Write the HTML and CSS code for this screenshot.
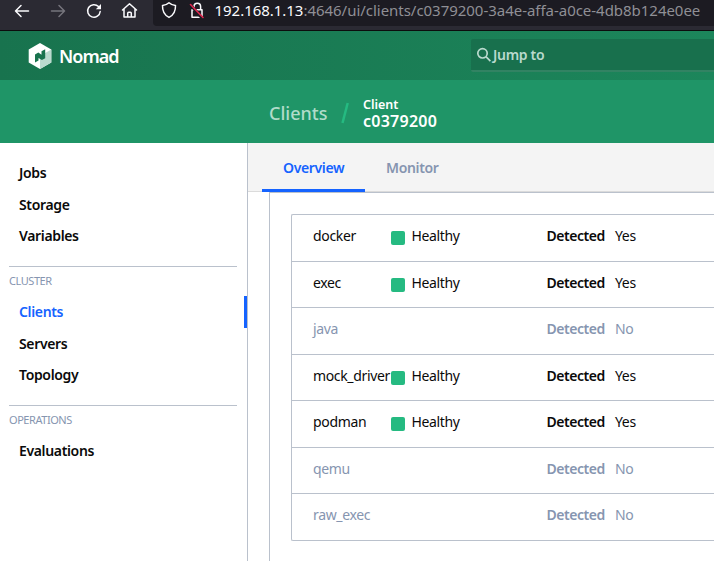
FILE: index.html
```html
<!DOCTYPE html>
<html lang="en">
<head>
<meta charset="utf-8">
<title>Client c0379200 - Nomad</title>
<link rel="stylesheet" href="styles.css">
</head>
<body>
<div class="browser">
  <svg class="tools" width="153" height="30" viewBox="0 0 153 30" fill="none" stroke-width="1.5" stroke-linecap="round" stroke-linejoin="round">
    <path stroke="#fbfbfe" d="M28.5 11H15.5M21 5.5 15.5 11l5.500 5.500"/>
    <path stroke="#76757d" d="M51.500 11H64.500M59 5.500 64.500 11 59 16.500"/>
    <path stroke="#fbfbfe" d="M98.500 6.600A6.300 6.300 0 1 0 100.200 11.500"/>
    <path fill="#fbfbfe" d="M101 4v5.200h-5.200z"/>
    <path stroke="#fbfbfe" d="M122.500 10 129.500 3.800 136.500 10M124 9v8h11V9M127.700 17v-3.700q0-1 1-1h1.600q1 0 1 1V17"/>
  </svg>
  <div class="urlbar">
    <svg class="guards" width="62" height="26" viewBox="0 0 62 26" fill="none" stroke-width="1.500" stroke-linecap="round" stroke-linejoin="round">
      <path stroke="#fbfbfe" d="M16 2.700C14 4.500 12 5.200 9.500 5.400 9.300 10.500 11 15 16 17.400 21 15 22.700 10.500 22.500 5.400 20 5.200 18 4.500 16 2.700z"/>
      <path stroke="#fbfbfe" d="M39 9.700h10v7.600H39zM41 9.500V6.500a3.300 3.300 0 0 1 6.600 0V9.500"/>
      <path stroke="#1c1b22" stroke-width="3" d="M38.500 6 49 18"/>
      <path stroke="#e22850" stroke-width="1.600" d="M37.500 4.500 50 17.500"/>
    </svg>
    <span class="address"><b>192.168.1.13</b>:4646/ui/clients/c0379200-3a4e-affa-a0ce-4db8b124e0ee</span>
  </div>
</div>
<header class="top">
  <div class="brand">
    <svg width="24" height="28" viewBox="0 0 24 28">
      <path fill="#fff" d="M12 1 23.300 7.500V20.500L12 27 .7 20.500V7.500z"/>
      <path fill="#badace" d="M23.300 7.500V20.500L12 27V14z"/>
      <path fill="#18734e" d="M7 12.400 10.300 10.500 13.500 12.700V9.300L17.200 7.200V16.200L13.900 18 10.500 15.900V18.600L7 20.600z"/>
    </svg>
    <span class="wordmark">Nomad</span>
  </div>
  <div class="search">
    <svg width="16" height="16" viewBox="0 0 16 16" fill="none" stroke="#badace" stroke-width="1.700"><circle cx="6.500" cy="6.300" r="4.700"/><path d="M9.900 9.700 14.400 14.200"/></svg>
    <span>Jump to</span>
  </div>
</header>
<div class="crumbs">
  <a class="parent">Clients</a>
  <svg class="slash" width="9" height="22" viewBox="0 0 9 22"><path d="M1.500 21 6.700 1" stroke="#25ba81" stroke-width="2.500"/></svg>
  <div class="current"><span class="kind">Client</span><span class="ident">c0379200</span></div>
</div>
<div class="page">
  <nav class="side">
    <a>Jobs</a><a>Storage</a><a>Variables</a>
    <h2>Cluster</h2>
    <a class="active">Clients</a><a>Servers</a><a>Topology</a>
    <h2>Operations</h2>
    <a>Evaluations</a>
  </nav>
  <main>
    <div class="tabs"><a class="on">Overview</a><a>Monitor</a></div>
    <section class="panel">
      <div class="drivers">
        <div class="row"><span class="name">docker</span><i></i><span class="health">Healthy</span><b>Detected</b><span>Yes</span></div>
        <div class="row"><span class="name">exec</span><i></i><span class="health">Healthy</span><b>Detected</b><span>Yes</span></div>
        <div class="row off"><span class="name">java</span><b>Detected</b><span>No</span></div>
        <div class="row"><span class="name">mock_driver</span><i></i><span class="health">Healthy</span><b>Detected</b><span>Yes</span></div>
        <div class="row"><span class="name">podman</span><i></i><span class="health">Healthy</span><b>Detected</b><span>Yes</span></div>
        <div class="row off"><span class="name">qemu</span><b>Detected</b><span>No</span></div>
        <div class="row off"><span class="name">raw_exec</span><b>Detected</b><span>No</span></div>
      </div>
    </section>
  </main>
</div>
</body>
</html>
```

FILE: styles.css
```css
* { box-sizing: border-box; }
body {
  margin: 0;
  height: 561px;
  overflow: hidden;
  display: flex;
  flex-direction: column;
  background: #fff;
  color: #0a0a0a;
  font: 14px/20px "Noto Sans", sans-serif;
}
svg { display: block; flex: none; }
.browser {
  flex: none;
  height: 31px;
  display: flex;
  background: #2b2a33;
  border-bottom: 1px solid #0c0c0d;
}
.urlbar {
  flex: 1;
  height: 26px;
  display: flex;
  background: #1c1b22;
  border-bottom-left-radius: 4px;
  white-space: nowrap;
}
.address { margin-left: -0.5px; color: #8f8f95; font-size: 15px; line-height: 20px; letter-spacing: -0.03px; }
.address b { color: #fbfbfe; font-weight: 400; }
.top {
  flex: none;
  height: 49px;
  display: flex;
  justify-content: space-between;
  align-items: center;
  background: linear-gradient(to right, #18734e, #1c865b);
}
.brand { display: flex; align-items: center; gap: 7px; padding-left: 28px; }
.wordmark { color: #fff; font-size: 18px; font-weight: 600; line-height: 24px; letter-spacing: -1px; }
.search {
  width: 243px;
  height: 33px;
  display: flex;
  align-items: center;
  gap: 1px;
  padding: 1px 0 0 5px;
  border-bottom: 2px solid #328363;
  border-radius: 2px 0 0 2px;
  background: #18704d;
  color: #badace;
  font-weight: 600;
  letter-spacing: -0.3px;
}
.crumbs {
  flex: none;
  height: 63px;
  display: flex;
  align-items: center;
  padding: 3px 0 0 269px;
  background: #1f9567;
  color: #fff;
  font-weight: 600;
}
.parent { width: 72px; color: #b1dcca; font-size: 18px; font-weight: 500; }
.slash { margin-right: 13px; }
.current { display: flex; flex-direction: column; }
.kind { font-size: 12.5px; line-height: 17px; }
.ident { font-size: 16px; line-height: 17px; letter-spacing: 0.25px; }
.page { flex: 1; min-height: 0; display: flex; }
.side {
  width: 248px;
  padding-top: 14px;
  border-right: 1px solid #bac1cc;
}
.side a {
  display: block;
  height: 31.500px;
  padding-left: 19px;
  font-weight: 600;
  line-height: 31px;
  letter-spacing: -0.35px;
}
.side .active { color: #1563ff; border-right: 3px solid #1563ff; }
.side h2 {
  height: 30px;
  margin: 14.500px 10px 0 9px;
  border-top: 1px solid #bac1cc;
  color: #8695b0;
  font-size: 11px;
  font-weight: 400;
  line-height: 28.500px;
  letter-spacing: -0.45px;
  text-transform: uppercase;
}
main { flex: 1; min-width: 0; display: flex; flex-direction: column; }
.tabs {
  flex: none;
  height: 49px;
  display: flex;
  padding-left: 14px;
  background: #f4f4f4;
  border-bottom: 1px solid #dbdbdb;
}
.tabs a {
  height: 49px;
  padding: 0 21px;
  color: #8695b0;
  font-weight: 600;
  line-height: 50px;
  letter-spacing: -0.35px;
}
.tabs .on { width: 103px; color: #1563ff; border-bottom: 3px solid #1563ff; }
.panel {
  flex: 1;
  min-height: 0;
  margin-left: 21px;
  padding: 21px 0 0 21px;
  border: solid #bac1cc;
  border-width: 1px 0 0 1px;
}
.drivers {
  border: solid #bac1cc;
  border-width: 1px 0 1px 1px;
  border-radius: 2px 0 0 2px;
}
.row {
  height: 46.500px;
  display: grid;
  grid-template-columns: 78px 20.500px 135px 68.500px 1fr;
  padding-left: 21px;
  border-bottom: 1px solid #bac1cc;
  line-height: 42px;
  letter-spacing: -0.35px;
}
.row:last-child { height: 46px; border-bottom: 0; }
.row i { width: 14px; height: 14px; margin-top: 16px; border-radius: 2px; background: #25ba81; }
.row b { grid-column: 4; font-weight: 600; letter-spacing: -0.45px; }
.off { color: #8695b0; }
```
